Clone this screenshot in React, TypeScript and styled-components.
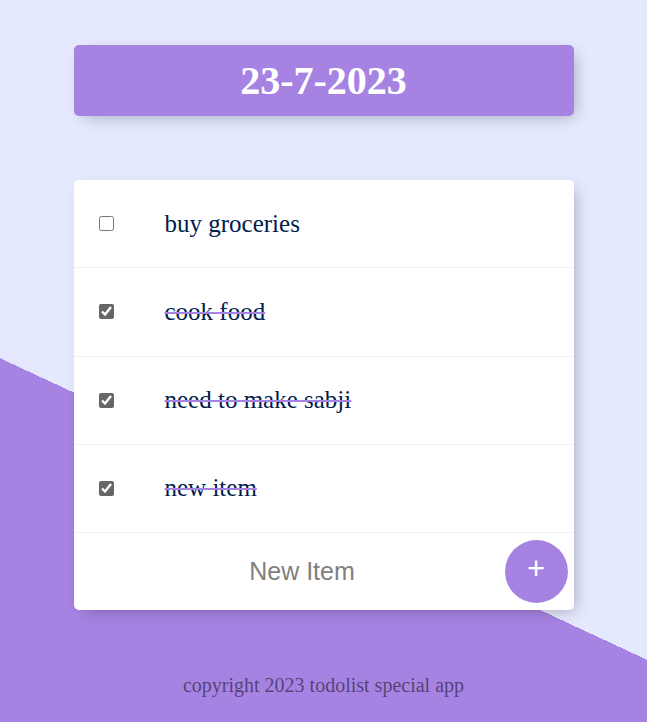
import React, { useState } from "react"
import styled, { createGlobalStyle } from "styled-components"

const GlobalStyle = createGlobalStyle`
  html {
    background: linear-gradient(25deg, #A683E3 50%, #E4E9FD 50%) top left / 100% 1018px no-repeat, #A683E3;
  }
  body {
    margin: 0;
    font-family: "Liberation Serif", "Times New Roman", serif;
  }
`

const Page = styled.div`
  display: flex;
  flex-direction: column;
  align-items: center;
  padding-top: 45px;
`

const HeadingBox = styled.div`
  width: 500px;
  height: 71px;
  display: flex;
  align-items: center;
  justify-content: center;
  background-color: #A683E3;
  border-radius: 5px;
  box-shadow: 5px 5px 15px -5px rgba(0, 0, 0, 0.3);
`

const Title = styled.h1`
  margin: 0;
  color: #fff;
  font-size: 40px;
  font-weight: bold;
`

const ListBox = styled.div`
  width: 500px;
  margin-top: 64px;
  background: white;
  border-radius: 5px;
  box-shadow: 5px 5px 15px -5px rgba(0, 0, 0, 0.3);
`

const Item = styled.div`
  box-sizing: border-box;
  height: 88.25px;
  display: flex;
  align-items: center;
  padding-left: 25px;
  border-bottom: 1px solid #F1F1F1;
`

const Check = styled.input`
  width: 15px;
  height: 15px;
  margin: 0;
  accent-color: #666;
`

const ItemText = styled.p<{ $done: boolean }>`
  margin: 0 0 0 51px;
  font-size: 25px;
  color: #00204a;
  text-decoration: ${(p) => (p.$done ? "line-through" : "none")};
  text-decoration-color: #A683E3;
  text-decoration-thickness: 2px;
`

const AddForm = styled.form`
  height: 77px;
  display: flex;
  align-items: center;
`

const NewInput = styled.input`
  flex: 1;
  min-width: 0;
  height: 60px;
  margin-left: 26px;
  padding: 0;
  border: none;
  text-align: center;
  font-family: "Liberation Sans", Arial, sans-serif;
  font-size: 25px;
  color: #00204a;
  background: transparent;

  &::placeholder {
    color: grey;
    opacity: 1;
  }

  &:focus {
    outline: none;
    box-shadow: inset 0 -3px 0 0 #A683E3;
  }
`

const AddButton = styled.button`
  width: 63px;
  height: 63px;
  margin-right: 6px;
  padding: 0 0 6px;
  border: 0;
  border-radius: 50%;
  background-color: #A683E3;
  color: #fff;
  font-family: "Liberation Sans", Arial, sans-serif;
  font-size: 31px;
  cursor: pointer;
`

const Footer = styled.footer`
  margin-top: 64px;
  color: rgba(0, 0, 0, 0.5);
  font-size: 20px;
  text-align: center;
`

const initialItems = [
  { id: 1, name: "buy groceries", done: false },
  { id: 2, name: "cook food", done: true },
  { id: 3, name: "need to make sabji", done: true },
  { id: 4, name: "new item", done: true },
]

export default function App() {
  const [items, setItems] = useState(initialItems)
  const [text, setText] = useState("")

  const toggle = (id: number) =>
    setItems((prev) => prev.map((it) => (it.id === id ? { ...it, done: !it.done } : it)))

  const handleSubmit = (e: React.FormEvent) => {
    e.preventDefault()
    if (!text.trim()) return
    setItems((prev) => [...prev, { id: Date.now(), name: text, done: false }])
    setText("")
  }

  return (
    <>
      <GlobalStyle />
      <Page>
        <HeadingBox>
          <Title>23-7-2023</Title>
        </HeadingBox>
        <ListBox>
          {items.map((it) => (
            <Item key={it.id}>
              <Check type="checkbox" checked={it.done} onChange={() => toggle(it.id)} />
              <ItemText $done={it.done}>{it.name}</ItemText>
            </Item>
          ))}
          <AddForm onSubmit={handleSubmit}>
            <NewInput
              type="text"
              placeholder="New Item"
              autoComplete="off"
              value={text}
              onChange={(e) => setText(e.target.value)}
            />
            <AddButton type="submit">+</AddButton>
          </AddForm>
        </ListBox>
        <Footer>copyright 2023 todolist special app</Footer>
      </Page>
    </>
  )
}
